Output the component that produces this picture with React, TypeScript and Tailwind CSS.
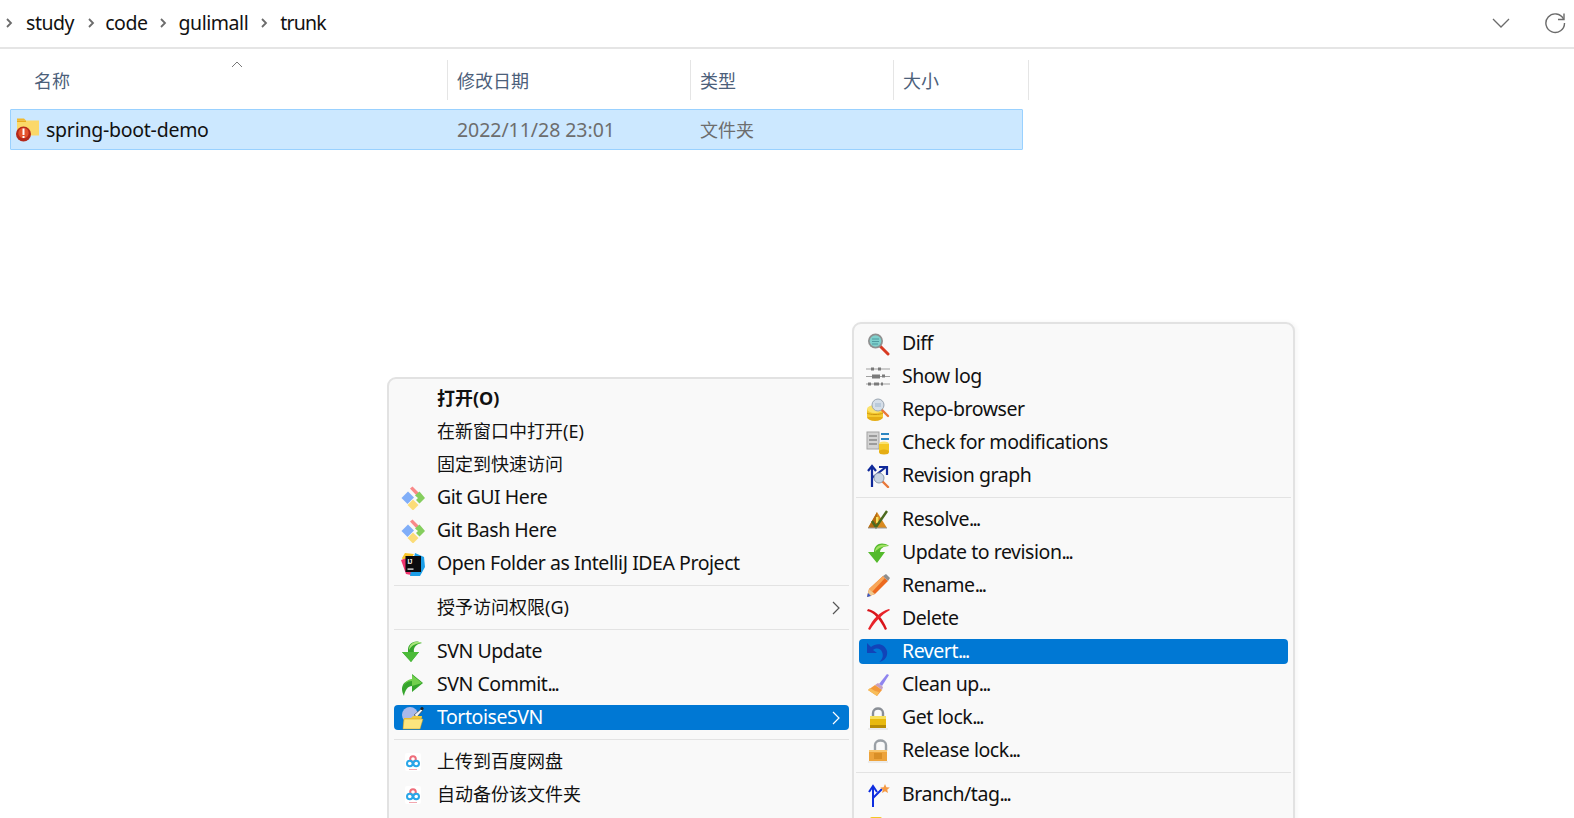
import React from "react";

const Svg = ({ children, className = "" }: { children: React.ReactNode; className?: string }) => (
  <svg viewBox="0 0 24 24" width="24" height="24" className={`shrink-0 ${className}`}>{children}</svg>
);

const Chevron = () => (
  <svg viewBox="0 0 8 12" width="8" height="12" className="shrink-0">
    <path d="M2 2l4 4-4 4" fill="none" stroke="#6b6b6b" strokeWidth="1.8" />
  </svg>
);

const FolderWarn = () => (
  <svg viewBox="0 0 24 24" width="24" height="24" className="shrink-0">
    <path d="M1 0.5h7l2 2h-9z" fill="#f2b92e" />
    <rect x="1" y="2.5" width="22" height="15" fill="#fbd869" />
    <rect x="1" y="2.5" width="9" height="1.5" fill="#e9a91f" />
    <circle cx="7.5" cy="16" r="7.5" fill="#b5281a" />
    <circle cx="7.5" cy="15" r="5.2" fill="#e4532d" />
    <rect x="6.5" y="10.5" width="2" height="6.5" fill="#fff" />
    <rect x="6.5" y="18" width="2" height="2" fill="#fff" />
  </svg>
);

const GitIcon = () => (
  <Svg>
    <path d="M9 2.5L11.5.5 18 7l-2.5 2.5z" fill="#f98989" />
    <path d="M.5 12L7 5.5l6 6L6.5 18z" fill="#80aef8" />
    <path d="M18.5 5.5l5.5 6.5-5.5 5.5-3.5-3.5 2-2-3-2.5z" fill="#85ce5e" />
    <path d="M12 13.5l5.5 5.5-5.5 5.5L6.5 19z" fill="#fbdc78" />
  </Svg>
);

const IdeaIcon = () => (
  <Svg>
    <path d="M1 6l3-5 9 1-8 12z" fill="#f9c62b" />
    <path d="M0 8l5 14 10 2L6 6z" fill="#f2336f" />
    <path d="M14 1l9 4 1 10-5 9H9z" fill="#1c9fe8" />
    <rect x="4.5" y="4" width="15.5" height="16" fill="#0b0b0e" />
    <text x="6.5" y="11.5" fill="#fff" fontSize="6.5" fontWeight="700" fontFamily="Liberation Sans, sans-serif">IJ</text>
    <rect x="6.5" y="16.5" width="6" height="1.2" fill="#fff" />
  </Svg>
);

const UpdateIcon = () => (
  <Svg>
    <path d="M21 3C14-1 7 3 7 10v2H1l9 10 8-10h-5c-1-4 2-8 8-9z" fill="#35a52c" />
    <path d="M21 3C15 0 8 3 8 10c3-5 7-7 13-7z" fill="#a8e67a" />
    <path d="M1 12h17l-8 10z" fill="#4cbb3a" />
  </Svg>
);

const CommitIcon = () => (
  <Svg>
    <path d="M3 23C-2 14 3 7 11 7V1l11 9-11 9v-6c-4 0-7 4-8 10z" fill="#35a52c" />
    <path d="M11 2l10 8-10 3V8C6 8 2 11 2 17 2 11 6 6 11 6z" fill="#73d04e" />
  </Svg>
);

const TortoiseIcon = () => (
  <Svg>
    <circle cx="9" cy="9" r="8" fill="#a9b9ea" />
    <path d="M13 9l7-6 2 1-6 7z" fill="#f2f2f2" stroke="#333" strokeWidth=".6" />
    <circle cx="21" cy="2.5" r="1.6" fill="#222" />
    <path d="M3 12h7l2-2h9l-2 13H2z" fill="#f2c93a" />
    <path d="M3 13h19l-3 10H2z" fill="#fce57e" stroke="#c79a20" strokeWidth=".5" />
  </Svg>
);

const BaiduIcon = () => (
  <Svg>
    <rect x="4" y="3" width="16" height="18" rx="2" fill="#ffffff" />
    <circle cx="12" cy="9" r="2.8" fill="none" stroke="#ef6d7a" strokeWidth="2" />
    <circle cx="8.8" cy="13.5" r="2.8" fill="none" stroke="#2aa6e8" strokeWidth="2" />
    <circle cx="15.2" cy="13.5" r="2.8" fill="none" stroke="#2aa6e8" strokeWidth="2" />
    <rect x="8" y="19" width="8" height="1" fill="#f2a7b0" />
  </Svg>
);

const DiffIcon = () => (
  <Svg>
    <path d="M14 14l8 8" stroke="#d83a22" strokeWidth="3" strokeLinecap="round" />
    <circle cx="9.5" cy="9" r="7.5" fill="#8f8f8f" />
    <circle cx="9.5" cy="9" r="5.8" fill="#7fd0cc" />
    <path d="M6 7h7M6 9.5h7M6 12h6" stroke="#4f9aa0" strokeWidth="1" />
  </Svg>
);

const LogIcon = () => (
  <Svg>
    <path d="M0 4h24M0 11.5h24M0 19h24" stroke="#a0a0a0" strokeWidth="1.2" />
    <path d="M5 2.5h3v3H5zM12 2.5h3v3h-3zM6 9.5h8v4H6zM16 9.5h3v3h-3zM2 17.5h3v3H2zM8 17.5h5v3H8zM15 17.5h2v3h-2z" fill="#7a7a7a" />
  </Svg>
);

const RepoIcon = () => (
  <Svg>
    <ellipse cx="9" cy="19" rx="8" ry="4" fill="#e5ad14" />
    <rect x="1" y="11" width="16" height="8" fill="#f5ca2f" />
    <ellipse cx="9" cy="11" rx="8" ry="4" fill="#fbe26c" />
    <path d="M1 15c3 2 13 2 16 0" stroke="#cc9612" fill="none" />
    <path d="M16 12l6 6" stroke="#e8783a" strokeWidth="2.4" strokeLinecap="round" />
    <circle cx="12" cy="7" r="6" fill="#d5dee8" stroke="#9aa5b1" />
    <path d="M9 6h6M9 8h6" stroke="#9fb6cc" />
  </Svg>
);

const CheckIcon = () => (
  <Svg>
    <rect x="1" y="1" width="12" height="17" fill="#d3d3d3" stroke="#a4a4a4" />
    <path d="M3 5h8M3 9h8M3 13h8" stroke="#8a8a8a" strokeWidth="1.4" />
    <rect x="15" y="2" width="8" height="2" fill="#2c86c2" />
    <rect x="15" y="7" width="8" height="2" fill="#2c86c2" />
    <ellipse cx="18" cy="13" rx="5" ry="2.5" fill="#fbe26c" />
    <rect x="13" y="13" width="10" height="8" fill="#f4c823" />
    <ellipse cx="18" cy="21" rx="5" ry="2.5" fill="#e5ad14" />
  </Svg>
);

const GraphIcon = () => (
  <Svg>
    <path d="M6 23V2M2 7l4-5 4 5M6 14L20 3M13 3h8v8" fill="none" stroke="#102a9a" strokeWidth="2.2" />
    <path d="M16 17l6 6" stroke="#e8783a" strokeWidth="2.4" strokeLinecap="round" />
    <circle cx="13" cy="14" r="5" fill="#c9d5e2" stroke="#8b9aac" />
  </Svg>
);

const ResolveIcon = () => (
  <Svg>
    <path d="M11 4l10 16H2z" fill="#d98a1f" />
    <path d="M11 4l-9 16h9z" fill="#b56d12" />
    <rect x="10" y="9" width="2.4" height="6" fill="#f8e25a" />
    <path d="M6 13l4 6L21 3" fill="none" stroke="#4c6a1f" strokeWidth="2.4" />
    <path d="M2 20h19" stroke="#999" strokeWidth="1" />
  </Svg>
);

const UpdateRevIcon = () => (
  <Svg>
    <path d="M23 5C16 0 8 3 8 11H2l9 11 8-11h-5c0-3 3-6 9-6z" fill="#54ba2c" />
    <path d="M23 5C17 2 9 4 9 11c3-4 8-6 14-6z" fill="#a3e264" />
  </Svg>
);

const RenameIcon = () => (
  <Svg>
    <path d="M1 23l2-8L17 2l5 5L9 20z" fill="#ec6a20" />
    <path d="M3 15L17 2l2 2L6 18z" fill="#f8a758" />
    <path d="M17 2l3-2 4 4-2 3z" fill="#8e8e8e" />
    <path d="M1 23l2-8 6 5z" fill="#efc98f" />
    <path d="M1 23l1-4 3 3z" fill="#3759c9" />
  </Svg>
);

const DeleteIcon = () => (
  <Svg>
    <path d="M1 4c7 1 13 9 18 19l2-1C17 12 11 4 2 2z" fill="#d8141a" />
    <path d="M2 22C7 12 13 5 23 2l1 1C15 8 9 15 4 23z" fill="#e8242a" />
  </Svg>
);

const RevertIcon = () => (
  <Svg>
    <path d="M1 3v10h10l-4-3c4-3 8-1 9 2 2 4 0 8-3 10 6-1 9-6 8-11C19 4 11 2 5 7z" fill="#1144b8" />
  </Svg>
);

const CleanIcon = () => (
  <Svg>
    <path d="M21 1l2 1-7 11-3-2z" fill="#8f85ef" />
    <path d="M12 10l5 4-1 3-7-5z" fill="#c7a0c0" />
    <path d="M9 12l7 5-5 6-9-6z" fill="#f39a3c" />
    <path d="M4 15l5 3 4 1-2 4-9-6z" fill="#f7bd5a" />
  </Svg>
);

const LockIcon = () => (
  <Svg>
    <path d="M7 11V7c0-6 10-6 10 0v4" fill="none" stroke="#8a8f96" strokeWidth="2.4" />
    <rect x="4" y="10" width="16" height="12" fill="#e8b90e" />
    <rect x="4" y="10" width="16" height="3" fill="#f8e05a" />
    <rect x="4" y="19" width="16" height="3" fill="#b88c06" />
    <path d="M2 23h20" stroke="#ddd" />
  </Svg>
);

const UnlockIcon = () => (
  <Svg>
    <path d="M9 11V6c0-6 11-6 11 0v6" fill="none" stroke="#9aa0a6" strokeWidth="2.4" />
    <rect x="3" y="11" width="18" height="11" fill="#eda33b" />
    <rect x="3" y="11" width="18" height="2" fill="#f8c66e" />
    <path d="M8 15h8M8 17h8M8 19h8" stroke="#c57a14" strokeWidth="1" />
    <path d="M2 23h20" stroke="#ddd" />
  </Svg>
);

const BranchIcon = () => (
  <Svg>
    <path d="M7 24V4M3 9l4-6 4 6M7 15l9-9" fill="none" stroke="#0e2de0" strokeWidth="2" />
    <path d="M19 1l1.4 3.2 3.4.3-2.6 2.2.8 3.3-3-1.8-3 1.8.8-3.3-2.6-2.2 3.4-.3z" fill="#f59a45" />
  </Svg>
);

const MergeStub = () => (
  <Svg>
    <rect x="4" y="1" width="12" height="23" rx="2" fill="#f4c823" />
  </Svg>
);

type Item = { label: string; icon?: React.ReactNode; bold?: boolean; arrow?: boolean; active?: boolean };

const hasCjk = (s: string) => /[\u4e00-\u9fff]/.test(s);

const Label = ({ text }: { text: string }) =>
  text.endsWith("...") ? (
    <>
      {text.slice(0, -3)}
      <span className="tracking-[-1.7px]">...</span>
    </>
  ) : (
    <>{text}</>
  );

const Row = ({ item, iconBox }: { item: Item; iconBox: string }) => (
  <div className="h-[33px] flex items-center">
    <div
      className={`flex-1 h-[25px] flex items-center rounded-[4px] ${item.active ? "bg-[#0078d4] text-white" : "text-[#111111]"}`}
    >
      <div className={`${iconBox} flex justify-center shrink-0`}>{item.icon}</div>
      <span className={`whitespace-nowrap ${hasCjk(item.label) ? "text-[18px] tracking-normal" : "pb-[2px]"} ${item.bold ? "font-bold" : ""}`}>
        <Label text={item.label} />
      </span>
      {item.arrow && (
        <svg viewBox="0 0 10 16" width="10" height="16" className="ml-auto mr-[8px]">
          <path d="M2 2l6 6-6 6" fill="none" stroke={item.active ? "#ffffff" : "#555555"} strokeWidth="1.2" />
        </svg>
      )}
    </div>
  </div>
);

const Sep = ({ cls }: { cls: string }) => (
  <div className="h-[11px] flex items-center">
    <div className={`h-px bg-[#e3e3e3] flex-1 ${cls}`} />
  </div>
);

const leftTop: Item[] = [
  { label: "打开(O)", bold: true },
  { label: "在新窗口中打开(E)" },
  { label: "固定到快速访问" },
  { label: "Git GUI Here", icon: <GitIcon /> },
  { label: "Git Bash Here", icon: <GitIcon /> },
  { label: "Open Folder as IntelliJ IDEA Project", icon: <IdeaIcon /> },
];
const leftSvn: Item[] = [
  { label: "SVN Update", icon: <UpdateIcon /> },
  { label: "SVN Commit...", icon: <CommitIcon /> },
  { label: "TortoiseSVN", icon: <TortoiseIcon />, arrow: true, active: true },
];
const leftBaidu: Item[] = [
  { label: "上传到百度网盘", icon: <BaiduIcon /> },
  { label: "自动备份该文件夹", icon: <BaiduIcon /> },
];
const r1: Item[] = [
  { label: "Diff", icon: <DiffIcon /> },
  { label: "Show log", icon: <LogIcon /> },
  { label: "Repo-browser", icon: <RepoIcon /> },
  { label: "Check for modifications", icon: <CheckIcon /> },
  { label: "Revision graph", icon: <GraphIcon /> },
];
const r2: Item[] = [
  { label: "Resolve...", icon: <ResolveIcon /> },
  { label: "Update to revision...", icon: <UpdateRevIcon /> },
  { label: "Rename...", icon: <RenameIcon /> },
  { label: "Delete", icon: <DeleteIcon /> },
  { label: "Revert...", icon: <RevertIcon />, active: true },
  { label: "Clean up...", icon: <CleanIcon /> },
  { label: "Get lock...", icon: <LockIcon /> },
  { label: "Release lock...", icon: <UnlockIcon /> },
];
const r3: Item[] = [
  { label: "Branch/tag...", icon: <BranchIcon /> },
  { label: "", icon: <MergeStub /> },
];

const font = "font-['Noto_Sans','Noto_Sans_CJK_SC',sans-serif]";
const latin = "text-[19.5px] tracking-[-0.45px]";

export default function App() {
  const LBox = "w-[36px] ml-[1px] mr-[6px]";
  const RBox = "w-[36px] ml-[1px] mr-[6px]";
  return (
    <div className={`relative w-[1574px] h-[818px] overflow-hidden bg-white ${font} ${latin} text-[#111111]`}>
      <div className="h-[49px] border-b-2 border-[#e5e5e5] flex items-center pb-[2px]">
        <div className="ml-[5px]"><Chevron /></div>
        <span className="ml-[13px]">study</span>
        <div className="ml-[13px]"><Chevron /></div>
        <span className="ml-[10px]">code</span>
        <div className="ml-[12px]"><Chevron /></div>
        <span className="ml-[11px]">gulimall</span>
        <div className="ml-[12px]"><Chevron /></div>
        <span className="ml-[12px] tracking-[-0.8px]">trunk</span>
        <svg viewBox="0 0 18 10" width="18" height="10" className="ml-auto mr-[34px]">
          <path d="M1 1l8 8 8-8" fill="none" stroke="#6b6b6b" strokeWidth="1.3" />
        </svg>
        <svg viewBox="0 0 22 22" width="22" height="22" className="mr-[8px]">
          <path d="M19.5 7A9.3 9.3 0 1 0 20.5 11" fill="none" stroke="#6b6b6b" strokeWidth="1.4" />
          <path d="M20 1.5V7.5H14" fill="none" stroke="#6b6b6b" strokeWidth="1.4" />
        </svg>
      </div>

      <div className="relative ml-[10px] mt-[11px] flex h-[40px] w-[1019px] items-center text-[18px] tracking-normal text-[#4c607a]">
        <div className="w-[438px] h-full flex items-center border-r border-[#e5e5e5] pl-[24px] pt-[2px]">名称</div>
        <div className="w-[243px] h-full flex items-center border-r border-[#e5e5e5] pl-[9px] pt-[2px]">修改日期</div>
        <div className="w-[203px] h-full flex items-center border-r border-[#e5e5e5] pl-[9px] pt-[2px]">类型</div>
        <div className="w-[135px] h-full flex items-center border-r border-[#e5e5e5] pl-[9px] pt-[2px]">大小</div>
        <svg viewBox="0 0 12 7" width="12" height="7" className="absolute left-[221px] top-[1px]">
          <path d="M1 6l5-5 5 5" fill="none" stroke="#777777" strokeWidth="1" />
        </svg>
      </div>

      <div className="ml-[10px] mt-[9px] w-[1013px] h-[41px] flex items-center bg-[#cce8ff] border border-[#99d1ff] rounded-[1px]">
        <div className="ml-[5px]"><FolderWarn /></div>
        <span className="ml-[6px] w-[411px] text-[#111111] tracking-[-0.25px]">spring-boot-demo</span>
        <span className="w-[243px] text-[#6d6d6d] tracking-[-0.05px]">2022/11/28 23:01</span>
        <span className="text-[#6d6d6d] text-[18px] tracking-normal pt-[2px]">文件夹</span>
      </div>

      <div className="absolute left-[387px] top-[377px] w-[480px] h-[460px] rounded-[9px] border-2 border-[#e2e2e2] bg-[#f9f9f9] pt-[3px] pl-[5px] pr-[16px]">
        {leftTop.map((i) => <Row key={i.label} item={i} iconBox={LBox} />)}
        <Sep cls="" />
        <Row item={{ label: "授予访问权限(G)", arrow: true }} iconBox={LBox} />
        <Sep cls="" />
        {leftSvn.map((i) => <Row key={i.label} item={i} iconBox={LBox} />)}
        <Sep cls="" />
        {leftBaidu.map((i) => <Row key={i.label} item={i} iconBox={LBox} />)}
      </div>

      <div className="absolute left-[852px] top-[322px] w-[443px] h-[520px] rounded-[9px] border-2 border-[#e2e2e2] bg-[#f9f9f9] shadow-[2px_0_4px_rgba(0,0,0,0.04)] pt-[3px] pl-[5px] pr-[5px]">
        {r1.map((i) => <Row key={i.label} item={i} iconBox={RBox} />)}
        <Sep cls="-mx-[3px]" />
        {r2.map((i) => <Row key={i.label} item={i} iconBox={RBox} />)}
        <Sep cls="-mx-[3px]" />
        {r3.map((i) => <Row key={i.label || "stub"} item={i} iconBox={RBox} />)}
      </div>
    </div>
  );
}
